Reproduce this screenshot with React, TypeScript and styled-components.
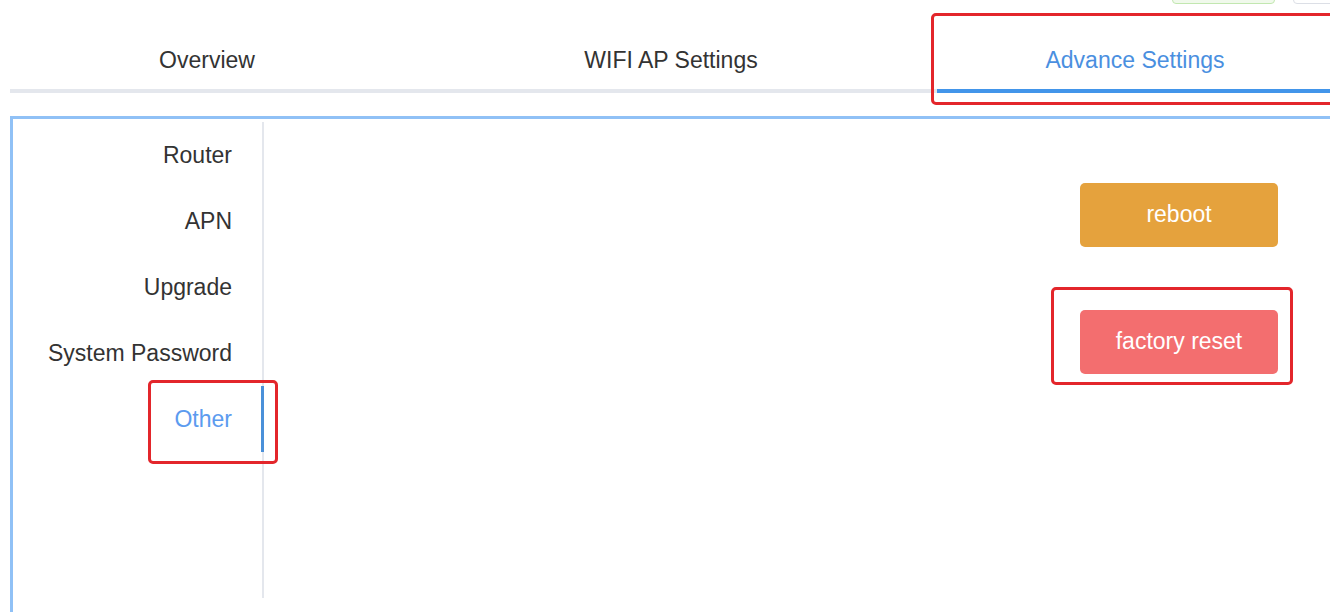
import React from "react";
import styled, { createGlobalStyle } from "styled-components";

const GlobalStyle = createGlobalStyle`
  html, body {
    margin: 0;
    padding: 0;
    background: #ffffff;
    overflow: hidden;
  }
  body {
    font-family: "Liberation Sans", Arial, sans-serif;
    color: #333333;
  }
`;

const Page = styled.div`
  position: relative;
  width: 1360px;
  margin-left: 10px;
  height: 612px;
`;

const ToolBar = styled.div`
  display: flex;
  justify-content: flex-end;
  align-items: flex-end;
  gap: 18px;
  height: 4px;
  overflow: hidden;
`;

const PlainButton = styled.button<{ tone: "success" | "default"; w: number }>`
  flex-shrink: 0;
  width: ${({ w }) => w}px;
  height: 36px;
  border-radius: 4px;
  border: 1px solid ${({ tone }) => (tone === "success" ? "#c2e7b0" : "#dcdfe6")};
  background: ${({ tone }) => (tone === "success" ? "#f0f9eb" : "#ffffff")};
`;

const TabBar = styled.div`
  overflow: hidden;
`;

const TabList = styled.div`
  display: flex;
  margin-left: -35px;
`;

const Tab = styled.div<{ active?: boolean }>`
  position: relative;
  flex-shrink: 0;
  width: 464px;
  box-sizing: border-box;
  padding: 42px 0 15px;
  border-bottom: 4px solid #e4e7ed;
  line-height: 28px;
  font-size: 23px;
  text-align: center;
  color: ${({ active }) => (active ? "#4a8fe0" : "#333333")};
`;

const TabInk = styled.span`
  position: absolute;
  left: 34px;
  right: 30px;
  bottom: -5px;
  height: 5px;
  background: #4295ea;
`;

const Panel = styled.div`
  margin-top: 23px;
  border-top: 3px solid #90c1f6;
  border-left: 3px solid #90c1f6;
  display: flex;
  align-items: flex-start;
  padding-top: 3px;
  height: 520px;
  box-sizing: border-box;
`;

const SideMenu = styled.nav`
  width: 249px;
  height: 476px;
  border-right: 2px solid #e4e7ed;
  display: flex;
  flex-direction: column;
  flex-shrink: 0;
`;

const MenuItem = styled.div<{ active?: boolean }>`
  position: relative;
  height: 66px;
  display: flex;
  align-items: center;
  justify-content: flex-end;
  padding-right: 30px;
  font-size: 23px;
  color: ${({ active }) => (active ? "#5c9bef" : "#333333")};
`;

const MenuInk = styled.span`
  position: absolute;
  right: -2px;
  top: 0;
  bottom: 0;
  width: 3px;
  background: #4a90d9;
`;

const Content = styled.div`
  flex: 1;
  display: flex;
  flex-direction: column;
  align-items: flex-end;
  gap: 63px;
  padding: 61px 92px 0 0;
`;

const ActionButton = styled.button<{ tone: "warning" | "danger" }>`
  width: 198px;
  height: 64px;
  border: none;
  border-radius: 5px;
  background: ${({ tone }) => (tone === "warning" ? "#e5a23d" : "#f36e6f")};
  color: #ffffff;
  font-family: "Liberation Sans", Arial, sans-serif;
  font-size: 23px;
  padding: 0 0 1px;
`;

const Marker = styled.div<{ x: number; y: number; w: number; h: number }>`
  position: absolute;
  left: ${({ x }) => x - 10}px;
  top: ${({ y }) => y}px;
  width: ${({ w }) => w}px;
  height: ${({ h }) => h}px;
  border: 3px solid #e3262b;
  border-radius: 5px;
  box-sizing: border-box;
  pointer-events: none;
`;

const tabs = ["Overview", "WIFI AP Settings", "Advance Settings"];
const menu = ["Router", "APN", "Upgrade", "System Password", "Other"];

export default function App() {
  return (
    <>
      <GlobalStyle />
      <Page>
        <ToolBar>
          <PlainButton tone="success" w={103} />
          <PlainButton tone="default" w={77} />
        </ToolBar>

        <TabBar>
          <TabList>
            {tabs.map((t, i) => (
              <Tab key={t} active={i === 2}>
                {t}
                {i === 2 && <TabInk />}
              </Tab>
            ))}
          </TabList>
        </TabBar>

        <Panel>
          <SideMenu>
            {menu.map((m, i) => (
              <MenuItem key={m} active={i === 4}>
                {m}
                {i === 4 && <MenuInk />}
              </MenuItem>
            ))}
          </SideMenu>
          <Content>
            <ActionButton tone="warning">reboot</ActionButton>
            <ActionButton tone="danger">factory reset</ActionButton>
          </Content>
        </Panel>

        <Marker x={931} y={13} w={430} h={92} />
        <Marker x={148} y={380} w={130} h={84} />
        <Marker x={1051} y={287} w={242} h={98} />
      </Page>
    </>
  );
}
